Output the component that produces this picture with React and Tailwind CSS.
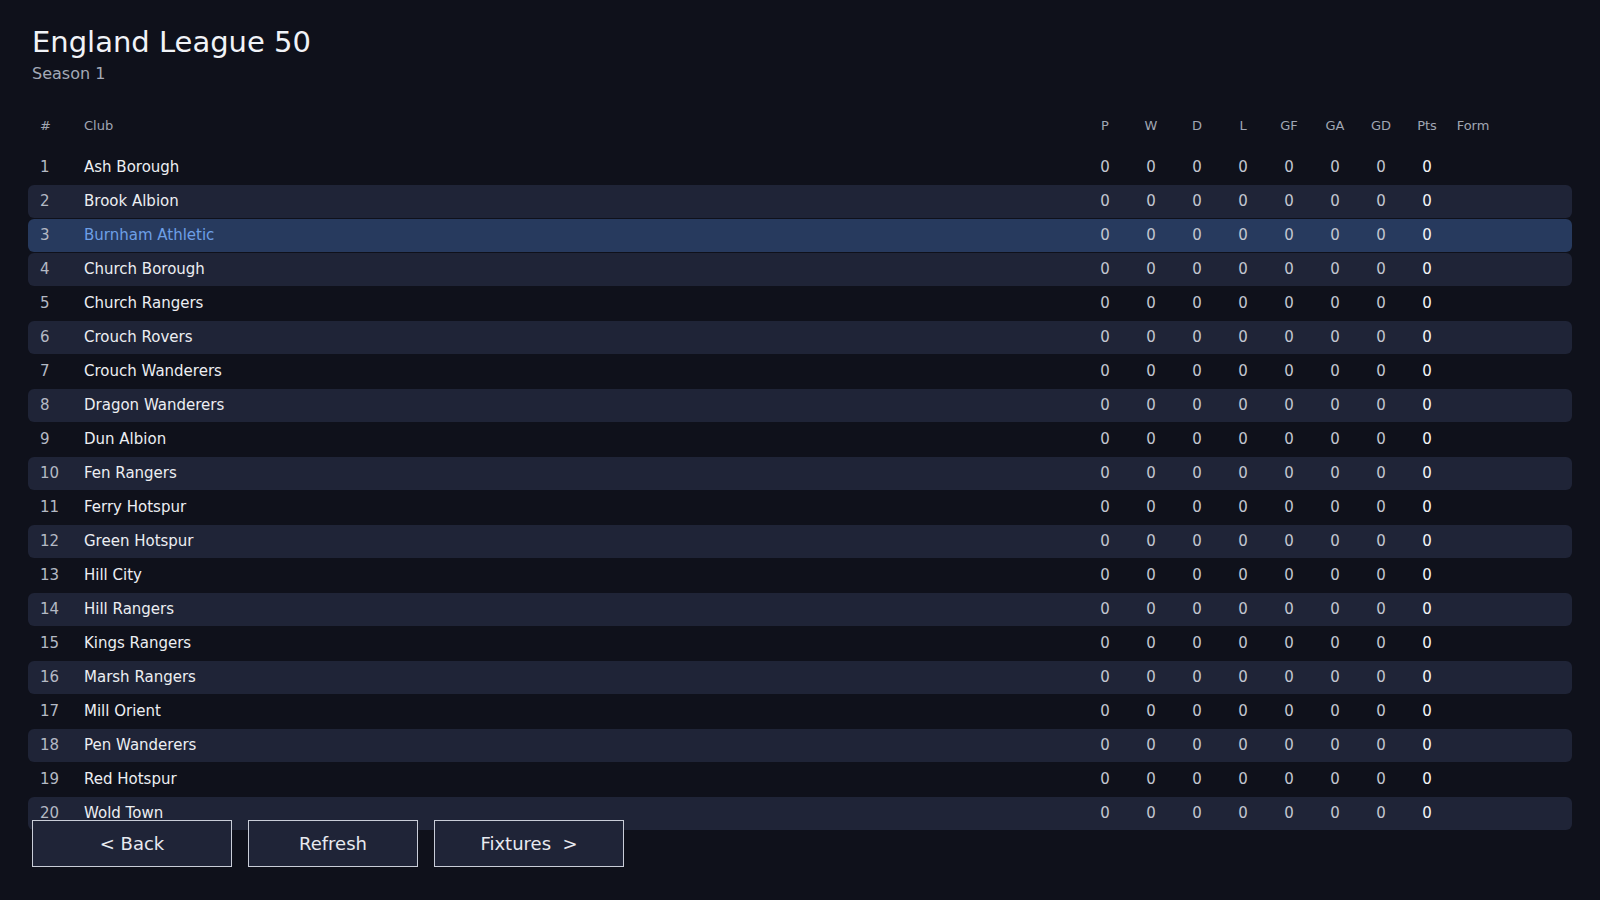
import React from "react";

const clubs = [
  "Ash Borough",
  "Brook Albion",
  "Burnham Athletic",
  "Church Borough",
  "Church Rangers",
  "Crouch Rovers",
  "Crouch Wanderers",
  "Dragon Wanderers",
  "Dun Albion",
  "Fen Rangers",
  "Ferry Hotspur",
  "Green Hotspur",
  "Hill City",
  "Hill Rangers",
  "Kings Rangers",
  "Marsh Rangers",
  "Mill Orient",
  "Pen Wanderers",
  "Red Hotspur",
  "Wold Town",
];

const statCols = ["P", "W", "D", "L", "GF", "GA", "GD"];

export default function App() {
  const myClub = "Burnham Athletic";

  return (
    <div
      className="h-screen w-full overflow-hidden bg-[#0f111b] px-7 pt-[24px] text-[#e5e7eb]"
      style={{ fontFamily: '"DejaVu Sans", Verdana, sans-serif' }}
    >
      {/* Title */}
      <div className="pl-1">
        <h1 className="text-[29px] leading-[36px] text-[#f1f3f7]">England League 50</h1>
        <p className="mt-1 text-[16px] leading-[20px] text-[#a3a9b6]">Season 1</p>
      </div>

      {/* Header */}
      <div className="mt-[25px] mb-[8px] flex h-[34px] items-center pl-3 pr-[76px] text-[13px] text-[#a0a6b3]">
        <div className="w-11">#</div>
        <div className="flex-1">Club</div>
        {statCols.map((c) => (
          <div key={c} className="w-[46px] text-center">
            {c}
          </div>
        ))}
        <div className="w-[46px] text-center">Pts</div>
        <div className="w-[46px] text-center">Form</div>
      </div>

      {/* Rows */}
      <div className="flex flex-col gap-px">
        {clubs.map((club, i) => {
          const isMine = club === myClub;
          const rowBg = isMine
            ? "bg-[#273a5e]"
            : i % 2 === 1
            ? "bg-[#1f2437]"
            : "bg-transparent";
          return (
            <div
              key={club}
              className={`flex h-[33px] items-center rounded-md pl-3 pr-[76px] text-[15px] ${rowBg}`}
            >
              <div className="w-11 text-[#b4b9c4]">{i + 1}</div>
              <div className={`flex-1 ${isMine ? "text-[#6d9fe6]" : "text-[#eceef2]"}`}>
                {club}
              </div>
              {statCols.map((c) => (
                <div key={c} className="w-[46px] text-center text-[#c3c7d0]">
                  0
                </div>
              ))}
              <div className="w-[46px] text-center text-[#f4f5f8]">0</div>
              <div className="w-[46px]"></div>
            </div>
          );
        })}
      </div>

      {/* Buttons */}
      <div className="relative -mt-[10px] flex gap-4 pl-1">
        <button className="h-[47px] w-[200px] border border-[#c9cdd8] bg-[#1f2437] text-[18px] text-[#e8eaf0]">
          {"< Back"}
        </button>
        <button className="h-[47px] w-[170px] border border-[#c9cdd8] bg-[#1f2437] text-[18px] text-[#e8eaf0]">
          Refresh
        </button>
        <button className="h-[47px] w-[190px] whitespace-pre border border-[#c9cdd8] bg-[#1f2437] text-[18px] text-[#e8eaf0]">
          {"Fixtures  >"}
        </button>
      </div>
    </div>
  );
}
